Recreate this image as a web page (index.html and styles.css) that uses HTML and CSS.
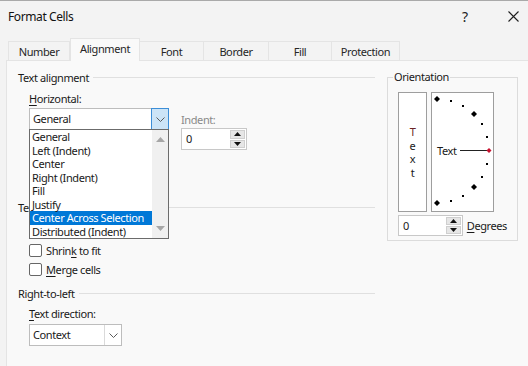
FILE: index.html
```html
<!DOCTYPE html>
<html lang="en">
<head>
    <meta charset="UTF-8">
    <title>Format Cells</title>
    <link rel="stylesheet" href="styles.css">
</head>
<body>
    <div class="window">
        <div class="titlebar">
            <span class="title">Format Cells</span>
            <span class="help">?</span>
            <svg class="close" width="11" height="11" viewBox="0 0 11 11">
                <path d="M0.5 0.5 L10.5 10.5 M10.5 0.5 L0.5 10.5" stroke="#1f1f1f" stroke-width="1.1" fill="none"/>
            </svg>
        </div>

        <div class="tabs">
            <div class="tab w-number">Number</div>
            <div class="tab active w-align">Alignment</div>
            <div class="tab w-font">Font</div>
            <div class="tab w-border">Border</div>
            <div class="tab w-fill">Fill</div>
            <div class="tab w-protect">Protection</div>
        </div>

        <div class="panel">
            <div class="main">
                <section class="group align">
                    <div class="group-head"><span>Text alignment</span></div>
                    <div class="h-row">
                        <div class="field">
                            <label><u>H</u>orizontal:</label>
                            <div class="combo wide open">
                                <span class="combo-val">General</span>
                                <span class="combo-btn">
                                    <svg width="9" height="5" viewBox="0 0 9 5"><path d="M0.5 0.5 L4.5 4.5 L8.5 0.5" stroke="#5a5a5a" fill="none"/></svg>
                                </span>
                                <ul class="droplist">
                                    <li>General</li>
                                    <li>Left (Indent)</li>
                                    <li>Center</li>
                                    <li>Right (Indent)</li>
                                    <li>Fill</li>
                                    <li>Justify</li>
                                    <li class="selected">Center Across Selection</li>
                                    <li>Distributed (Indent)</li>
                                    <li class="scrollbar">
                                        <svg width="9" height="5" viewBox="0 0 9 5"><path d="M0 5 L4.5 0 L9 5 Z" fill="#a6a6a6"/></svg>
                                        <svg width="9" height="5" viewBox="0 0 9 5"><path d="M0 0 L4.5 5 L9 0 Z" fill="#a6a6a6"/></svg>
                                    </li>
                                </ul>
                            </div>
                        </div>
                        <div class="field indent">
                            <label>Indent:</label>
                            <div class="spin indent-spin">
                                <span class="spin-val">0</span>
                                <span class="spin-btns">
                                    <span class="spin-btn"><svg width="7" height="4" viewBox="0 0 7 4"><path d="M0 4 L3.5 0 L7 4 Z" fill="#111"/></svg></span>
                                    <span class="spin-btn"><svg width="7" height="4" viewBox="0 0 7 4"><path d="M0 0 L3.5 4 L7 0 Z" fill="#111"/></svg></span>
                                </span>
                            </div>
                        </div>
                    </div>
                </section>

                <section class="group">
                    <div class="group-head"><span>Text control</span></div>
                    <div class="checks">
                        <div class="check"><span class="box"></span><span>Shrin<u>k</u> to fit</span></div>
                        <div class="check"><span class="box"></span><span><u>M</u>erge cells</span></div>
                    </div>
                </section>

                <section class="group">
                    <div class="group-head rtl"><span>Right-to-left</span></div>
                    <div class="field sub">
                        <label><u>T</u>ext direction:</label>
                        <div class="combo narrow">
                            <span class="combo-val">Context</span>
                            <span class="combo-btn">
                                <svg width="9" height="5" viewBox="0 0 9 5"><path d="M0.5 0.5 L4.5 4.5 L8.5 0.5" stroke="#5a5a5a" fill="none"/></svg>
                            </span>
                        </div>
                    </div>
                </section>
            </div>

            <fieldset class="orientation">
                <legend>Orientation</legend>
                <div class="orient-boxes">
                    <div class="vtext">
                        <span class="first">T</span><span>e</span><span>x</span><span>t</span>
                    </div>
                    <div class="dial">
                        <svg width="61" height="118" viewBox="0 0 61 118">
                            <g fill="#000">
                                <path d="M5 3 L8 6 L5 9 L2 6 Z"/>
                                <path d="M42 18 L45 21 L42 24 L39 21 Z"/>
                                <path d="M42 91 L45 94 L42 97 L39 94 Z"/>
                                <path d="M5 107 L8 110 L5 113 L2 110 Z"/>
                                <rect x="18" y="7" width="2" height="2"/>
                                <rect x="30" y="12" width="2" height="2"/>
                                <rect x="49" y="30" width="2" height="2"/>
                                <rect x="54" y="43" width="2" height="2"/>
                                <rect x="54" y="70" width="2" height="2"/>
                                <rect x="49" y="83" width="2" height="2"/>
                                <rect x="30" y="102" width="2" height="2"/>
                                <rect x="18" y="107" width="2" height="2"/>
                            </g>
                            <text x="5" y="62" class="dial-text">Text</text>
                            <line x1="28" y1="57.5" x2="55" y2="57.5" stroke="#222" stroke-width="1"/>
                            <path d="M57 55 L59.5 57.5 L57 60 L54.5 57.5 Z" fill="#c8102e"/>
                        </svg>
                    </div>
                </div>
                <div class="degrees">
                    <div class="spin deg-spin">
                        <span class="spin-val">0</span>
                        <span class="spin-btns">
                            <span class="spin-btn"><svg width="7" height="4" viewBox="0 0 7 4"><path d="M0 4 L3.5 0 L7 4 Z" fill="#111"/></svg></span>
                            <span class="spin-btn"><svg width="7" height="4" viewBox="0 0 7 4"><path d="M0 0 L3.5 4 L7 0 Z" fill="#111"/></svg></span>
                        </span>
                    </div>
                    <span><u>D</u>egrees</span>
                </div>
            </fieldset>
        </div>
    </div>
</body>
</html>
```

FILE: styles.css
```css
* {
    box-sizing: border-box;
}
body {
    margin: 0;
    font-family: "Noto Sans", "Open Sans", sans-serif;
    font-size: 11px;
    letter-spacing: -0.4px;
    color: #1a1a1a;
    background-color: #f3f3f3;
}
u {
    text-decoration-thickness: 1px;
    text-underline-offset: 2px;
}
.window {
    width: 528px;
    height: 366px;
    overflow: hidden;
    border-top: 1px solid #a9a9a9;
    background-color: #f3f3f3;
}
.titlebar {
    display: flex;
    align-items: center;
    height: 31px;
    padding-left: 8px;
}
.title {
    flex: 1;
    font-size: 12px;
    color: #111;
}
.help {
    width: 10px;
    margin-right: 36px;
    font-size: 14px;
    color: #222;
}
.close {
    margin-right: 9px;
}
.tabs {
    position: relative;
    z-index: 1;
    display: flex;
    align-items: flex-end;
    height: 29px;
    margin-bottom: -1px;
    padding-left: 8px;
}
.tab {
    height: 20px;
    line-height: 19px;
    text-align: center;
    background-color: #f3f3f3;
    border: 1px solid #e4e4e4;
    border-left: none;
    color: #262626;
}
.tab:first-child {
    border-left: 1px solid #e4e4e4;
}
.tab.active {
    height: 23px;
    line-height: 20px;
    background-color: #f9f9f9;
    border-bottom: none;
    border-left: 1px solid #e4e4e4;
}
.w-number { width: 62px; }
.w-align { width: 70px; }
.w-font { width: 64px; }
.w-border { width: 65px; }
.w-fill { width: 63px; }
.w-protect { width: 68px; }
.panel {
    display: grid;
    grid-template-columns: 357px 131px;
    column-gap: 12px;
    align-items: start;
    height: 306px;
    margin-left: 6px;
    padding: 8px 10px 0 11px;
    background-color: #f9f9f9;
    border-top: 1px solid #e4e4e4;
    border-left: 1px solid #e4e4e4;
}
.group-head {
    display: flex;
    align-items: center;
    gap: 4px;
    height: 16px;
}
.group-head::after {
    content: "";
    flex: 1;
    height: 1px;
    background-color: #e0e0e0;
}
.group.align {
    height: 130px;
}
.h-row {
    display: flex;
    gap: 12px;
    margin-top: 6px;
    padding-left: 11px;
}
.field label {
    display: block;
    height: 16px;
    line-height: 16px;
}
.field.indent {
    margin-top: 21px;
}
.field.indent label {
    color: #8a8a8a;
}
.field.sub {
    margin-top: 5px;
    padding-left: 11px;
}
.combo {
    position: relative;
    display: flex;
    height: 22px;
    margin-top: 1px;
    background-color: #ffffff;
    border: 1px solid #bdbdbd;
}
.combo.wide {
    width: 140px;
}
.combo.narrow {
    width: 93px;
    margin-top: 2px;
}
.combo-val {
    flex: 1;
    padding-left: 3px;
    line-height: 20px;
}
.combo-btn {
    display: flex;
    align-items: center;
    justify-content: center;
    width: 17px;
    border-left: 1px solid #dadada;
}
.combo.open .combo-btn {
    margin: -1px -1px -1px 0;
    width: 18px;
    background-color: #cce4f7;
    border: 1px solid #3d8ed7;
}
.droplist {
    position: absolute;
    z-index: 2;
    top: 20px;
    left: -1px;
    width: 140px;
    height: 110px;
    margin: 0;
    padding: 0 16px 0 0;
    list-style: none;
    background-color: #ffffff;
    border: 1px solid #6b6b6b;
}
.droplist li {
    height: 13.5px;
    line-height: 13.5px;
    padding-left: 2px;
    white-space: nowrap;
}
.droplist li.selected {
    background-color: #0078d7;
    color: #ffffff;
}
.droplist li.scrollbar {
    position: absolute;
    top: 0;
    right: 0;
    display: flex;
    flex-direction: column;
    align-items: center;
    justify-content: space-between;
    width: 16px;
    height: 108px;
    padding: 7px 0 7px 0;
    background-color: #f0f0f0;
}
.spin {
    display: flex;
    height: 22px;
    background-color: #ffffff;
    border: 1px solid #c8c8c8;
}
.indent-spin {
    width: 66px;
}
.spin-val {
    flex: 1;
    padding-left: 4px;
    line-height: 20px;
}
.spin-btns {
    display: flex;
    flex-direction: column;
    gap: 1px;
    width: 17px;
    padding: 1px;
    background-color: #ffffff;
}
.spin-btn {
    display: flex;
    flex: 1;
    align-items: center;
    justify-content: center;
    background-color: #e6e6e6;
    border: 1px solid #cfcfcf;
}
.checks {
    margin-top: 26px;
    padding-left: 11px;
}
.check {
    display: flex;
    align-items: center;
    gap: 4px;
    height: 19px;
}
.check .box {
    width: 13px;
    height: 13px;
    background-color: #ffffff;
    border: 1px solid #666666;
    border-radius: 2px;
}
.group-head.rtl {
    margin-top: 6px;
}
.orientation {
    margin: 0;
    padding: 7px 10px 4px 10px;
    min-width: 0;
    border: 1px solid #dcdcdc;
}
.orientation legend {
    margin-left: -5px;
    padding: 0 1px;
    line-height: 16px;
}
.orient-boxes {
    display: flex;
    gap: 4px;
    height: 120px;
}
.vtext {
    display: flex;
    flex-direction: column;
    align-items: center;
    justify-content: center;
    width: 29px;
    background-color: #ffffff;
    border: 1px solid #9e9e9e;
}
.vtext span {
    height: 13.5px;
    line-height: 13.5px;
}
.vtext .first {
    color: #6b2424;
}
.dial {
    width: 63px;
    background-color: #ffffff;
    border: 1px solid #9e9e9e;
}
.dial svg {
    display: block;
}
.dial-text {
    font-family: "Noto Sans", sans-serif;
    font-size: 11px;
    letter-spacing: -0.4px;
    fill: #1a1a1a;
}
.degrees {
    display: flex;
    align-items: center;
    gap: 4px;
    margin-top: 3px;
}
.deg-spin {
    width: 67px;
    height: 21px;
}
```
